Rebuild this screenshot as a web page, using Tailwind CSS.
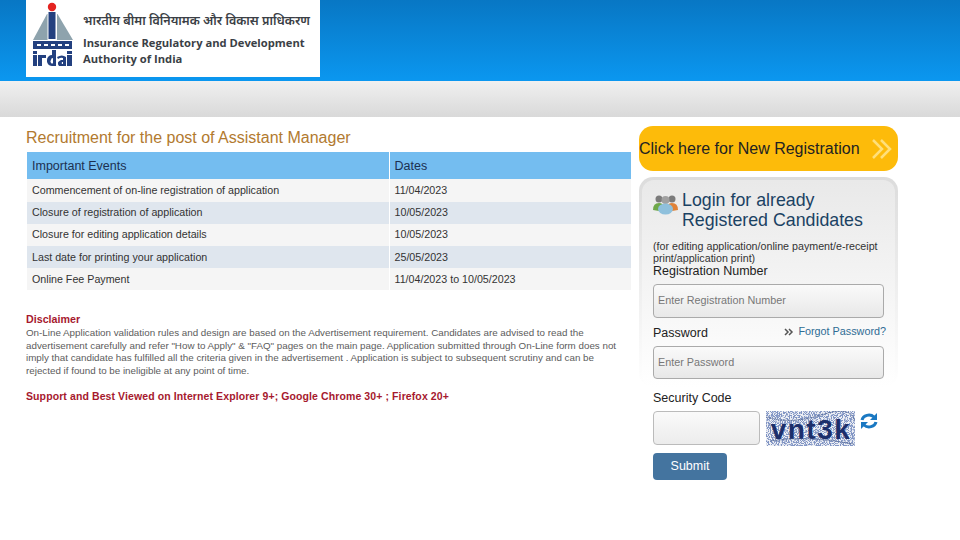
<!DOCTYPE html>
<html lang="en">
<head>
    <meta charset="UTF-8">
    <meta name="viewport" content="width=device-width, initial-scale=1.0">
    <title>IRDAI Recruitment</title>
    <script src="https://cdn.jsdelivr.net/npm/@tailwindcss/browser@4"></script>
</head>
<body class="bg-white h-[540px] w-[960px] overflow-hidden font-['Liberation_Sans',Arial,sans-serif]">
<header class="h-[81px] bg-gradient-to-b from-[#0877c4] to-[#0b97f0] pl-[26px]">
    <div class="w-[294px] h-[77px] bg-white flex pl-[6px]">
        <svg class="w-[42px] h-[67px] shrink-0" viewBox="0 0 42 67">
            <path d="M15 14 H15.5 V40 H1 Z" fill="#8ea3ad"/>
            <path d="M25 14 H25.5 L41 40 H25 Z" fill="#8ea3ad"/>
            <circle cx="20" cy="7" r="4.2" fill="#e42320"/>
            <rect x="16.5" y="12" width="7" height="27" fill="#23407f"/>
            <rect x="1" y="41" width="39" height="8" fill="#23407f"/>
            <g fill="#fff"><rect x="5" y="44" width="4" height="2"/><rect x="12" y="44" width="4" height="2"/><rect x="19" y="44" width="4" height="2"/><rect x="26" y="44" width="4" height="2"/><rect x="33" y="44" width="4" height="2"/></g>
            <g fill="#23407f">
                <rect x="1" y="51" width="4" height="3"/><rect x="1" y="55" width="4" height="11"/>
                <rect x="6" y="55" width="4" height="11"/><rect x="9" y="55" width="5" height="3"/>
                <path d="M15 60 a5 5 0 0 1 5 -5 V50 h4 V66 h-4 a5 5 0 0 1 -5 -6 Z M19 60 a1.5 2 0 0 0 2 3 V58 a2 2 0 0 0 -2 2 Z" fill-rule="evenodd"/>
                <path d="M25 57 q5 -3 9 0 V66 h-7 q-3 -4 2 -6 h2 V58 q-2 -1 -5 1 Z M30 62 q-1 2 1 2 V62 Z" fill-rule="evenodd"/>
                <rect x="35" y="51" width="5" height="3"/><rect x="35" y="55" width="5" height="11"/>
            </g>
        </svg>
        <div class="ml-[9px] text-[#3b3f46] font-['Open_Sans','Noto_Sans',sans-serif] font-bold">
            <p class="mt-[13px] text-[12.5px] leading-[16px] font-semibold font-['Noto_Sans','Noto_Sans_CJK_SC',sans-serif] whitespace-nowrap">भारतीय बीमा विनियामक और विकास प्राधिकरण</p>
            <p class="mt-[5px] text-[11.2px] leading-[17px] whitespace-nowrap">Insurance Regulatory and Development</p>
            <p class="text-[11.2px] leading-[16px]">Authority of India</p>
        </div>
    </div>
</header>
<div class="h-[36px] bg-gradient-to-b from-[#f0f0f0] to-[#d9d9d9]"></div>

<main class="flex pl-[26px] pt-[8px]">
    <section class="w-[605px] shrink-0">
        <h1 class="mt-[1px] text-[16px] leading-[24px] text-[#b27a2f] mb-[2px]">Recruitment for the post of Assistant Manager</h1>
        <table class="ml-[1px] w-[604px] border-collapse text-[10.7px] text-[#333]">
            <thead>
                <tr class="bg-[#74bdf0] h-[27px] text-[12.5px] text-[#1c3050] text-left">
                    <th class="font-normal pl-[5px] pt-[1px] w-[362px] border-r border-white">Important Events</th>
                    <th class="font-normal pl-[5px] pt-[1px]">Dates</th>
                </tr>
            </thead>
            <tbody>
                <tr class="bg-[#f5f5f5] h-[23px]"><td class="pl-[5px] border-r border-white">Commencement of on-line registration of application</td><td class="pl-[5px]">11/04/2023</td></tr>
                <tr class="bg-[#dfe6ee] h-[22px]"><td class="pl-[5px] pb-[1px] border-r border-white">Closure of registration of application</td><td class="pl-[5px] pb-[1px]">10/05/2023</td></tr>
                <tr class="bg-[#f5f5f5] h-[22px]"><td class="pl-[5px] pb-[1px] border-r border-white">Closure for editing application details</td><td class="pl-[5px] pb-[1px]">10/05/2023</td></tr>
                <tr class="bg-[#dfe6ee] h-[22px]"><td class="pl-[5px] border-r border-white">Last date for printing your application</td><td class="pl-[5px]">25/05/2023</td></tr>
                <tr class="bg-[#f5f5f5] h-[22px]"><td class="pl-[5px] border-r border-white">Online Fee Payment</td><td class="pl-[5px]">11/04/2023 to 10/05/2023</td></tr>
            </tbody>
        </table>
        <h2 class="mt-[23px] text-[10.7px] leading-[13px] font-bold text-[#a6192e]">Disclaimer</h2>
        <p class="mt-[1px] text-[9.8px] leading-[12.6px] text-[#5c5c5c]">On-Line Application validation rules and design are based on the Advertisement requirement. Candidates are advised to read the advertisement carefully and refer "How to Apply" &amp; "FAQ" pages on the main page. Application submitted through On-Line form does not imply that candidate has fulfilled all the criteria given in the advertisement . Application is subject to subsequent scrutiny and can be rejected if found to be ineligible at any point of time.</p>
        <p class="mt-[13px] text-[10.5px] leading-[13px] font-bold text-[#a6192e] tracking-[0.1px]">Support and Best Viewed on Internet Explorer 9+; Google Chrome 30+ ; Firefox 20+</p>
    </section>

    <aside class="ml-[8px] mt-[1px] w-[259px] shrink-0">
        <a class="h-[45px] rounded-[14px] bg-[#fdbb0a] flex items-center justify-between pr-[5px] text-[16px] text-[#222]">
            <span>Click here for New Registration</span>
            <svg class="w-[22px] h-[22px]" viewBox="0 0 22 22" fill="none" stroke="#ffdf7a" stroke-width="2.5"><path d="M2 2 L11 11 L2 20"/><path d="M10 2 L19 11 L10 20"/></svg>
        </a>
        <div class="mt-[6px] h-[210px] rounded-[14px] bg-gradient-to-b from-[#dcdcdc] to-white px-[3px] pt-[3px]">
            <div class="h-[207px] rounded-[12px] bg-gradient-to-b from-[#e9e9e9] to-white pl-[11px] pt-[10px]">
                <div class="flex">
                    <svg class="w-[25px] h-[24px] mt-[1px] shrink-0" viewBox="0 0 25 24">
                        <circle cx="6" cy="8" r="3.5" fill="#7b7b7b"/><circle cx="19" cy="8" r="3.5" fill="#7b7b7b"/>
                        <path d="M0 19 q0 -7 6 -7 q4 0 5 4 l-5 4 Z" fill="#6fa84a"/>
                        <path d="M25 19 q0 -7 -6 -7 q-4 0 -5 4 l5 4 Z" fill="#e08238"/>
                        <circle cx="12.5" cy="9" r="4" fill="#a0a0a0"/>
                        <ellipse cx="12.5" cy="18" rx="7.5" ry="5.5" fill="#8fc0dc"/>
                    </svg>
                    <h2 class="ml-[4px] text-[17.8px] leading-[20px] text-[#1b4263]">Login for already<br>Registered Candidates</h2>
                </div>
                <p class="mt-[10px] text-[10.7px] leading-[12px] text-[#333]">(for editing application/online payment/e-receipt<br>print/application print)</p>
                <label class="block text-[12.5px] leading-[14px] text-[#222]">Registration Number</label>
                <input type="text" placeholder="Enter Registration Number" class="mt-[6px] block w-[231px] h-[34px] rounded-[4px] border border-[#aaa] bg-gradient-to-b from-[#fafafa] to-[#e8e8e8] px-[4px] pb-[2px] text-[10.8px] placeholder:text-[#777]">
                <div class="flex items-center justify-between w-[233px] mt-[8px] h-[14px]">
                    <label class="text-[12.5px] text-[#222]">Password</label>
                    <a class="flex items-center -mt-[3px] text-[10.8px] text-[#2f6c94]">
                        <svg class="w-[10px] h-[8px] mr-[4px]" viewBox="0 0 10 8" fill="none" stroke="#555" stroke-width="1.5"><path d="M1 1 L4 4 L1 7"/><path d="M5 1 L8 4 L5 7"/></svg>
                        Forgot Password?
                    </a>
                </div>
                <input type="password" placeholder="Enter Password" class="mt-[6px] block w-[231px] h-[33px] rounded-[4px] border border-[#aaa] bg-gradient-to-b from-[#fafafa] to-[#e8e8e8] px-[4px] pb-[2px] text-[10.8px] placeholder:text-[#777]">
            </div>
        </div>
        <div class="pl-[14px]">
            <label class="block mt-[4px] text-[12.5px] leading-[14px] text-[#222]">Security Code</label>
            <div class="flex mt-[6px]">
                <input type="text" class="block w-[107px] h-[34px] rounded-[4px] border border-[#bbb] bg-gradient-to-b from-[#fafafa] to-[#ececec]">
                <svg class="ml-[6px] w-[89px] h-[35px] shrink-0" viewBox="0 0 89 35">
                    <filter id="speckle"><feTurbulence type="fractalNoise" baseFrequency="0.9" numOctaves="2" seed="4"/><feColorMatrix values="0 0 0 0 0.22  0 0 0 0 0.3  0 0 0 0 0.55  0 0 0 -9 5"/></filter>
                    <rect width="89" height="35" fill="#eef0f5"/>
                    <rect width="89" height="35" filter="url(#speckle)"/>
                    <text x="45" y="28" text-anchor="middle" font-family="Liberation Sans" font-weight="700" font-size="28" letter-spacing="1.5" fill="#1c2f6b">vnt3k</text>
                    <path d="M0 6 Q25 14 55 4 T89 10 M4 30 Q40 24 88 33" fill="none" stroke="#4a5f8f" stroke-width="0.6"/>
                </svg>
                <svg class="ml-[5px] mt-[1px] w-[18px] h-[18px]" viewBox="0 0 18 18" fill="none" stroke="#1a78c2" stroke-width="3"><path d="M2 8 A7 6 0 0 1 14 5"/><path d="M16 10 A7 6 0 0 1 4 13"/><path d="M17 1 V8 H10 Z" fill="#1a78c2" stroke="none"/><path d="M1 17 V10 H8 Z" fill="#1a78c2" stroke="none"/></svg>
            </div>
            <button class="mt-[7px] block w-[74px] h-[27px] rounded-[4px] bg-[#44749f] text-[12.5px] text-white">Submit</button>
        </div>
    </aside>
</main>
</body>
</html>
